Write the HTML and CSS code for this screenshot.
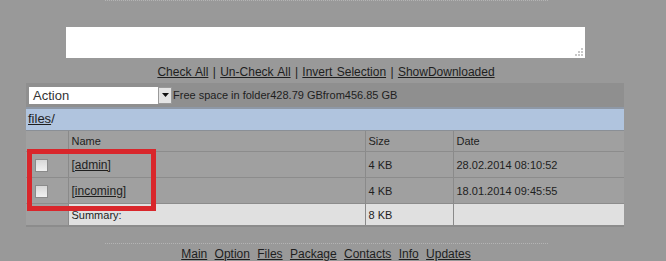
FILE: index.html
```html
<!DOCTYPE html>
<html lang="en">
<head>
  <meta charset="UTF-8">
  <title>Files</title>
  <link rel="stylesheet" href="styles.css">
</head>
<body>

<div class="page">
  <div class="rule rule-top"></div>

  <div class="memo">
    <svg class="grip" width="10" height="10" viewBox="0 0 10 10">
      <rect x="7" y="1" width="2" height="2" fill="#c8c8c8"/>
      <rect x="4" y="4" width="2" height="2" fill="#c8c8c8"/>
      <rect x="7" y="4" width="2" height="2" fill="#c8c8c8"/>
      <rect x="1" y="7" width="2" height="2" fill="#c8c8c8"/>
      <rect x="4" y="7" width="2" height="2" fill="#c8c8c8"/>
      <rect x="7" y="7" width="2" height="2" fill="#c8c8c8"/>
    </svg>
  </div>

  <div class="tools">
    <a href="#">Check All</a> | <a href="#">Un-Check All</a> | <a href="#">Invert Selection</a> | <a href="#">ShowDownloaded</a>
  </div>

  <div class="filebox">
    <div class="actionbar">
      <div class="select">
        <span class="select-text">Action</span>
        <span class="select-btn">
          <svg width="7" height="4" viewBox="0 0 7 4"><path d="M0 0h7L3.5 4z" fill="#111"/></svg>
        </span>
      </div>
      <span class="free">Free space in folder428.79 GBfrom456.85 GB</span>
    </div>

    <div class="path"><a href="#">files</a>/</div>

    <table class="files">
      <colgroup>
        <col class="c-check">
        <col class="c-name">
        <col class="c-size">
        <col class="c-date">
      </colgroup>
      <tr class="head">
        <td></td><td>Name</td><td>Size</td><td>Date</td>
      </tr>
      <tr class="item">
        <td><span class="check"></span></td>
        <td><a href="#">[admin]</a></td>
        <td>4 KB</td>
        <td>28.02.2014 08:10:52</td>
      </tr>
      <tr class="item">
        <td><span class="check"></span></td>
        <td><a href="#">[incoming]</a></td>
        <td>4 KB</td>
        <td>18.01.2014 09:45:55</td>
      </tr>
      <tr class="sum">
        <td></td><td>Summary:</td><td>8 KB</td><td></td>
      </tr>
    </table>

    <div class="marker"></div>
  </div>

  <div class="rule rule-bottom"></div>

  <div class="menu">
    <a href="#">Main</a> <a href="#">Option</a> <a href="#">Files</a> <a href="#">Package</a> <a href="#">Contacts</a> <a href="#">Info</a> <a href="#">Updates</a>
  </div>
</div>

</body>
</html>
```

FILE: styles.css
```css
body { margin: 0; background: #999; font-family: "Liberation Sans", Arial, sans-serif; font-size: 12px; color: #1e1e1e; }
a { color: #1e1e1e; }

.page { width: 666px; height: 261px; overflow: hidden; }
.rule { height: 0; border-top: 1px dotted #b4b4b4; width: 443px; margin-left: 105px; }

.memo { position: relative; width: 519px; height: 31px; margin: 26px 0 0 66px; background: #fff; }
.grip { position: absolute; right: 1px; bottom: 1px; }

.tools { text-align: center; margin: 6px 0 0 -14px; line-height: 16px; word-spacing: 1px; }

.filebox { position: relative; width: 598px; margin: 3px 0 0 26px; font-size: 11px; }
.actionbar { display: flex; align-items: center; gap: 1px; height: 24px; background: #8f8f8f; border-bottom: 2px solid #8e98a6; }
.select { display: flex; width: 143px; height: 17px; margin-left: 3px; background: #fff; font-size: 13px; }
.select-text { flex: 1; padding-left: 4px; line-height: 17px; color: #333; }
.select-btn { display: flex; align-items: center; justify-content: center; width: 14px; height: 17px; background: #e4e4e4; border: 1px solid #9a9a9a; box-sizing: border-box; }
.free { color: #1e1e1e; }

.path { height: 21px; line-height: 20px; padding-left: 2px; background: #b0c4de; border-bottom: 1px solid #8a8f96; font-size: 13px; }

.files { width: 598px; border-collapse: collapse; table-layout: fixed; }
.c-check { width: 42px; }
.c-name { width: 297px; }
.c-size { width: 88px; }
.c-date { width: 171px; }
.files td { padding: 0 0 0 3px; border-left: 1px solid #8a8a8a; border-bottom: 1px solid #8c8c8c; background: #a0a0a0; }
.files td:first-child { border-left: 0; }
.files a { font-size: 12px; }
.head td { height: 20px; }
.item td { height: 25px; }
.sum td { height: 21px; background: #e0e0e0; border-bottom: 2px solid #8c8c8c; }
.sum td:first-child { background: #a0a0a0; }
.check { display: block; width: 11px; height: 11px; margin: 1px 0 0 6px; border: 1px solid #8a8a8a; background: linear-gradient(#d8d8d8, #f0f0f0); }

.marker { position: absolute; left: 1px; top: 66px; width: 119px; height: 52px; border: 5px solid #d9262b; }

.rule-bottom { margin-top: 16px; }
.menu { text-align: center; margin: 3px 0 0 -14px; line-height: 14px; word-spacing: 4px; }
```
